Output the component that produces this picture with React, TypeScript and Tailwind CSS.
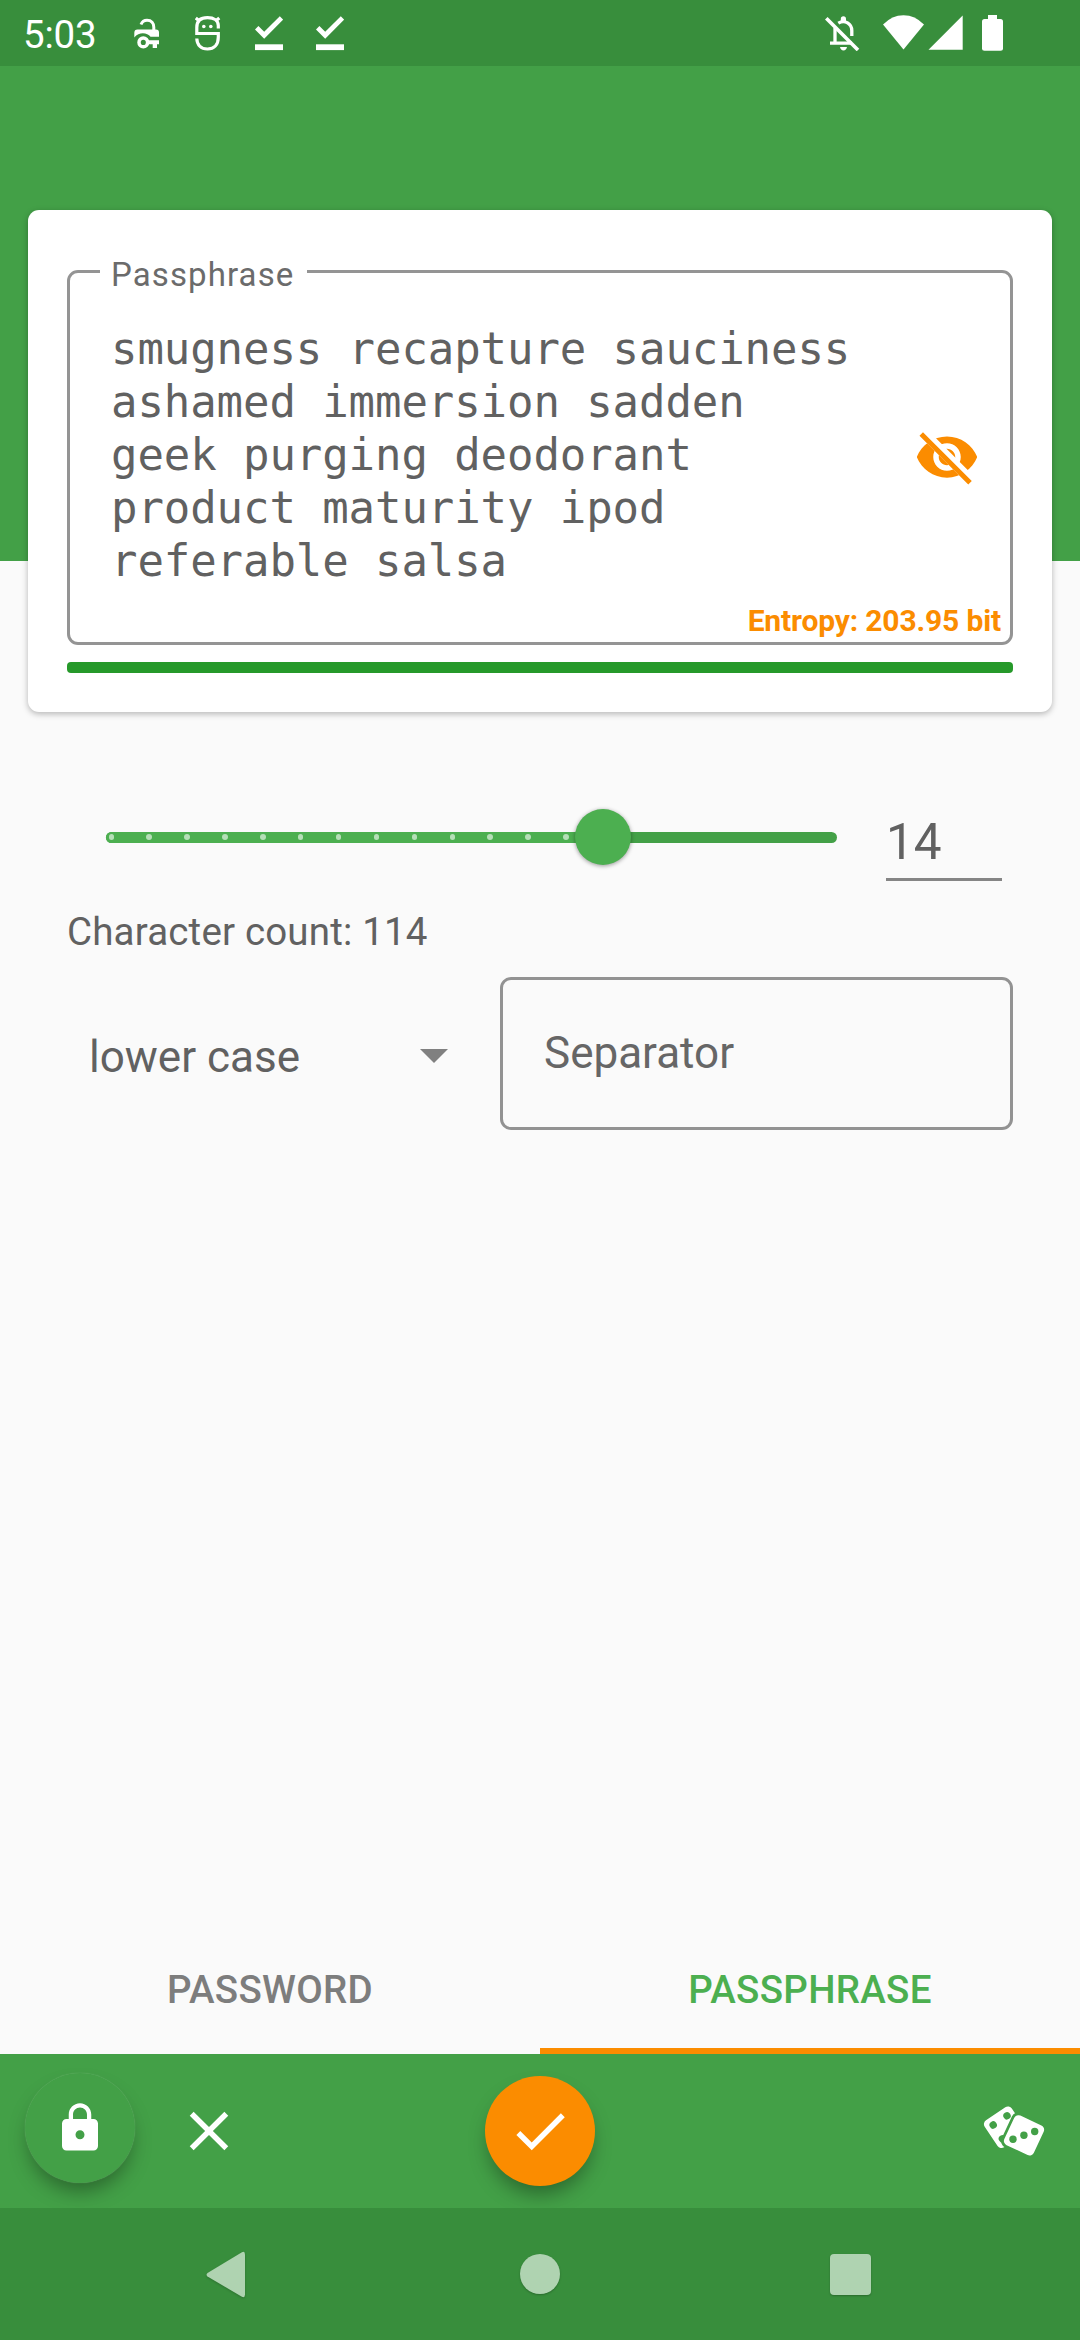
import React from "react";
import { MdCheck, MdClose, MdLock } from "react-icons/md";

const words = [
  "smugness recapture sauciness",
  "ashamed immersion sadden",
  "geek purging deodorant",
  "product maturity ipod",
  "referable salsa",
];

function DoneIcon() {
  return (
    <svg className="h-[35px] w-7" viewBox="0 0 28 35" fill="#fff">
      <path d="M0 13.4 3.4 10l5.8 5.8L24.8.2l3.4 3.4L9.2 22.8z" />
      <rect y="28.3" width="28.2" height="5.8" />
    </svg>
  );
}

function StatusBar() {
  return (
    <header className="flex h-[66px] items-start bg-[#388e3c] text-white">
      <span className="ml-[23px] mt-[11px] w-[74px] text-[38.500px] leading-[48px] tracking-[-0.2px] whitespace-nowrap">5:03</span>
      <svg className="ml-[37px] mt-[18px] h-8 w-[26px]" viewBox="0 0 26 32">
        <path d="M7 6.5C8.2 3.500 10.500 2.300 13 2.300c4.500 0 6.800 3 6.800 7V13" fill="none" stroke="#fff" strokeWidth="3" />
        <path d="M.3 19.500V15q0-3.400 3.200-3.400H22q3 0 3 3V18.800H16.500C13.500 14.400 5 13.300.3 19.500z" fill="#fff" />
        <circle cx="9.300" cy="24.400" r="4.300" fill="none" stroke="#fff" strokeWidth="3.500" />
        <path d="M14 22.300H25V26.300H23V30H18.700V26.300H14z" fill="#fff" />
      </svg>
      <svg className="ml-[35px] mt-[15px] h-9 w-[26px]" viewBox="0 0 26 36" fill="none" stroke="#fff" strokeWidth="3.200">
        <path d="M23.300 13.500V10.500C23.300 5.500 19 2.700 12.500 2.700S1.800 5.500 1.800 12.500V18.500H23.300V22C23.300 30 19 34 12.500 34S2 30 1.800 23.500" />
        <path d="M.8 3 4.500 6M24.300 3 20.600 6" />
        <circle cx="8.800" cy="11.500" r="1.800" fill="#fff" stroke="none" />
        <circle cx="15.800" cy="11.500" r="1.800" fill="#fff" stroke="none" />
      </svg>
      <div className="ml-[34px] mt-4 flex gap-[33px]">
        <DoneIcon />
        <DoneIcon />
      </div>
      <div className="mr-[77px] ml-auto mt-[15px] flex">
        <svg className="h-9 w-[35px]" viewBox="0 0 35 36" fill="none" stroke="#fff" strokeWidth="3">
          <path d="M1.300 3.300 33 35" strokeWidth="3.600" />
          <path d="M10 13V28M5 28.200H27M13.300 8.200C20 4 26.800 9 26.800 15.500V21" strokeWidth="3.300" />
          <path d="M15.800 6V4Q15.800 1.300 18.400 1.300T21 4V7zM15 32H22Q21.300 35.400 18.500 35.400T15 32z" fill="#fff" stroke="none" />
        </svg>
        <svg className="ml-[23px] h-[35px] w-[42px]" viewBox="0 0 42 35">
          <path d="M0 9.500Q9 .2 20.500.2T41 9.500L20.500 34.500z" fill="#fff" />
        </svg>
        <svg className="ml-[3px] h-[35px] w-[35px]" viewBox="0 0 35 35">
          <path d="M34.700.500V34.800H.500z" fill="#fff" />
        </svg>
        <svg className="ml-[19px] h-9 w-[21px]" viewBox="0 0 21 36" fill="#fff">
          <rect x="6" width="9" height="6" />
          <rect y="4" width="21" height="31.700" rx="2.500" />
        </svg>
      </div>
    </header>
  );
}

function VisibilityOffIcon() {
  return (
    <svg className="absolute top-[151px] right-[30px] h-[66px] w-[66px]" viewBox="0 0 24 24">
      <clipPath id="cross-out">
        <path d="M2 4.27 19.73 22 22.27 19.46 4.54 1.73V1H23V23H1V4.27z" />
      </clipPath>
      <path
        clipPath="url(#cross-out)"
        fill="#fb8c00"
        d="M12 4.5C7 4.5 2.73 7.61 1 12c1.730 4.390 6 7.500 11 7.500s9.270-3.110 11-7.500c-1.730-4.390-6-7.500-11-7.500zM12 17c-2.760 0-5-2.240-5-5s2.240-5 5-5 5 2.240 5 5-2.240 5-5 5zm0-8c-1.660 0-3 1.340-3 3s1.340 3 3 3 3-1.340 3-3-1.340-3-3-3z"
      />
      <path d="M3.27 4.27 19.74 20.74" stroke="#fb8c00" strokeWidth="1.8" strokeLinecap="square" />
    </svg>
  );
}

function PassphraseCard() {
  return (
    <section className="mx-7 h-[502px] rounded-[11px] bg-white px-[39px] pt-[60px] shadow-[0_2px_6px_rgba(0,0,0,0.28)]">
      <div className="relative flex h-[375px] flex-col rounded-[11px] border-[3px] border-[#949494] pt-[49px] pr-[9px] pl-[41px]">
        <span className="absolute -top-[18px] left-[30px] h-10 w-[207px] bg-white pl-[11px] text-[33px] leading-10 tracking-[1.1px] whitespace-nowrap text-[#6b6b6b]">
          Passphrase
        </span>
        <div className="font-['DejaVu_Sans_Mono',monospace] text-[44px] leading-[53px] tracking-[-0.09px] whitespace-nowrap text-[#616161]">
          {words.map((line) => (
            <p key={line}>{line}</p>
          ))}
        </div>
        <VisibilityOffIcon />
        <p className="mt-4 self-end text-[30px] leading-9 font-bold tracking-[-0.15px] whitespace-nowrap text-[#fb8c00]">Entropy: 203.95 bit</p>
      </div>
      <div className="mt-[17px] h-[11px] rounded-[4px] bg-[#26992a]" />
    </section>
  );
}

function WordCountSlider() {
  return (
    <div className="relative flex h-[11px] w-[731px] items-center rounded-full bg-[#43a047]">
      <div className="flex h-[11px] w-[498px] items-center gap-[32.4px] rounded-l-full bg-[#4caf50] pl-[2.500px]">
        {Array.from({ length: 13 }, (_, i) => (
          <i key={i} className="h-[5.500px] w-[5.500px] shrink-0 rounded-full bg-[#b5dfb7]" />
        ))}
      </div>
      <div className="absolute top-[-22.500px] left-[469px] h-14 w-14 rounded-full bg-[#4caf50] shadow-[0_1px_4px_rgba(0,0,0,0.4)]" />
    </div>
  );
}

function DiceIcon() {
  return (
    <svg className="h-[66px] w-[66px]" viewBox="20 12 66 66" fill="#fff">
      <g transform="translate(44.700 37.300) rotate(-33.700)">
        <rect x="-16.300" y="-16.300" width="32.600" height="32.600" rx="4.700" />
        <g fill="#43a047">
          <circle cx="-8.300" cy="-8.300" r="3.700" />
          <circle cx="8.300" cy="-8.300" r="3.700" />
          <circle cx="-8.300" cy="8.300" r="3.700" />
        </g>
      </g>
      <g transform="translate(64 45.300) rotate(25)">
        <rect x="-19" y="-19" width="38" height="38" rx="7" fill="#43a047" />
        <rect x="-16.300" y="-16.300" width="32.600" height="32.600" rx="4.700" />
      </g>
      <g fill="#43a047">
        <circle cx="53" cy="49.200" r="3.700" />
        <circle cx="63.900" cy="45.300" r="3.700" />
        <circle cx="74.700" cy="41.500" r="3.700" />
      </g>
    </svg>
  );
}

export default function App() {
  return (
    <div className="flex h-[2340px] w-[1080px] flex-col overflow-hidden bg-[#fafafa] font-[Roboto,sans-serif] text-[#616161]">
      <StatusBar />
      <div className="h-[495px] shrink-0 bg-[#43a047]" />
      <main className="relative -mt-[351px] grow">
        <PassphraseCard />

        <div className="mt-[84px] flex h-[85px] items-start pl-[106px]">
          <div className="pt-[35.500px]">
            <WordCountSlider />
          </div>
          <div className="ml-[49px] h-[85px] w-[116px] border-b-[3px] border-[#858585] pt-[16px] text-[49.500px] leading-[60px]">14</div>
        </div>

        <p className="mt-[27px] pl-[67px] text-[38.500px] leading-[48px] tracking-[0.17px] whitespace-nowrap">Character count: 114</p>

        <div className="mt-[21px] flex h-[153px] pr-[67px] pl-[89px]">
          <div className="flex w-[359px] items-start justify-between pt-[50px]">
            <span className="text-[44px] leading-[60px] whitespace-nowrap">lower case</span>
            <svg className="mt-[22px] h-[14px] w-7" viewBox="0 0 28 14">
              <path d="M0 0H28L14 14z" fill="#808080" />
            </svg>
          </div>
          <div className="ml-[52px] h-[153px] grow rounded-[11px] border-[3px] border-[#929292] pt-[43px] pl-[41px] text-[44px] leading-[60px] text-[#666]">
            Separator
          </div>
        </div>
      </main>

      <div className="grid h-[130px] shrink-0 grid-cols-2 text-center text-[38.500px] leading-[48px] font-medium tracking-[0.3px]">
        <div className="pt-[42px] text-[#7d7d7d]">PASSWORD</div>
        <div className="border-b-[6px] border-[#fb8c00] pt-[42px] text-[#4caf50]">PASSPHRASE</div>
      </div>

      <div className="flex h-[154px] shrink-0 items-start overflow-hidden bg-[#43a047] text-white">
        <div className="mt-[19px] ml-[25px] flex h-[110px] w-[110px] items-center justify-center rounded-full bg-[#43a047] shadow-[0_0_1px_rgba(255,255,255,0.3),0_12px_20px_-4px_rgba(0,0,0,0.36)]">
          <MdLock className="h-[54px] w-[54px]" />
        </div>
        <MdClose className="mt-11 ml-[41px] h-[66px] w-[66px]" />
        <div className="mt-[22px] ml-[243px] flex h-[110px] w-[110px] items-center justify-center rounded-full bg-[#fb8c00] shadow-[0_12px_20px_-4px_rgba(0,0,0,0.36)]">
          <MdCheck className="h-[66px] w-[66px]" />
        </div>
        <div className="mt-12 ml-auto pr-[34px]">
          <DiceIcon />
        </div>
      </div>

      <nav className="flex h-[132px] shrink-0 items-start bg-[#388e3c] pt-[43px]">
        <svg className="ml-[205px] h-12 w-[42px] drop-shadow-[0_1px_1px_rgba(0,0,0,0.2)]" viewBox="0 0 42 48">
          <path d="M36.500 1.500Q40-.5 40 3.500V43.500Q40 47.500 36.500 45.500L2.500 25.500Q.5 23.800 2.500 22z" fill="#afd3b1" />
        </svg>
        <div className="mt-[3px] ml-[273px] h-10 w-10 rounded-full bg-[#afd3b1] shadow-[0_1px_2px_rgba(0,0,0,0.25)]" />
        <div className="mt-[3px] ml-[270px] h-[41px] w-[41px] rounded-[4px] bg-[#afd3b1] shadow-[0_1px_2px_rgba(0,0,0,0.25)]" />
      </nav>
    </div>
  );
}
